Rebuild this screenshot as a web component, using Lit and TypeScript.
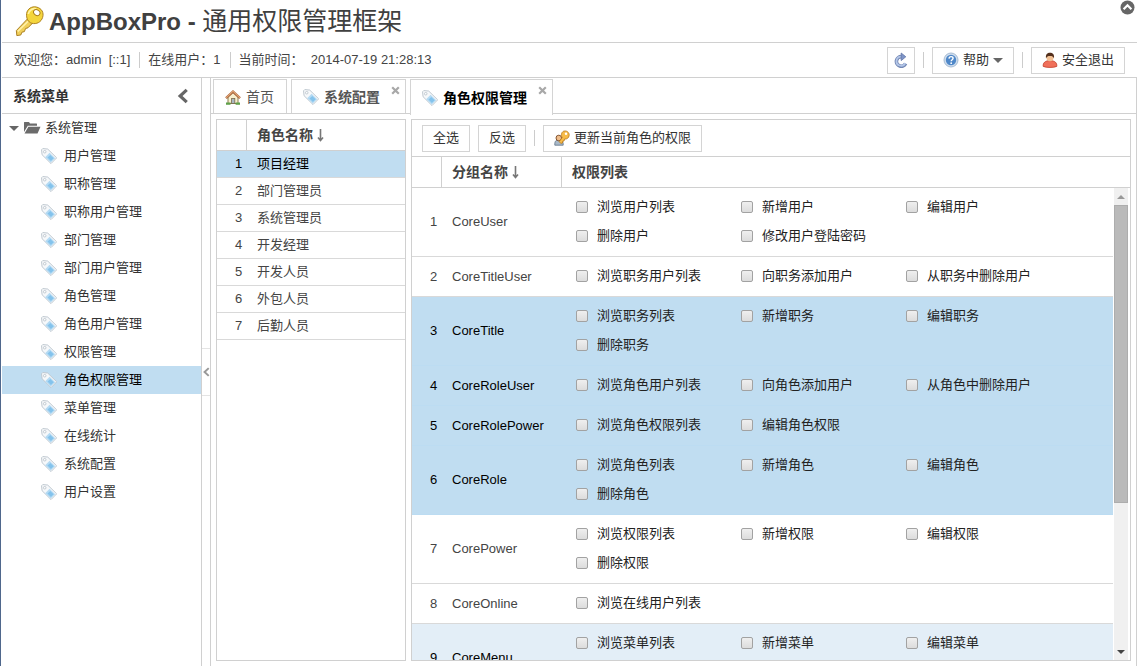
import { LitElement, html, svg, css, nothing } from "lit";
import { customElement, state } from "lit/decorators.js";
import { classMap } from "lit/directives/class-map.js";

const tagIcon = () => svg`<svg class="icon" width="16" height="16" viewBox="0.5 0.5 15 15" aria-hidden="true">
  <path d="M1 2.200 2.200 1l4.600.5 8.400 8.200-5.300 5.400L1.500 6.800Z" fill="#f6f8fa" stroke="#bcc6ce" stroke-width=".9"/>
  <path d="m8.600 5 5.200 5-4.200 4.200-5.200-5Z" fill="#b4daf3"/>
  <path d="m9.200 7 3.200 3.100-2.600 2.600-3.200-3.200Z" fill="#84c3ec"/>
  <circle cx="4" cy="4" r="1.200" fill="#fff" stroke="#b9c2ca" stroke-width=".8"/>
</svg>`;

const homeIcon = svg`<svg class="icon" width="16" height="16" viewBox="0 0 16 16" aria-hidden="true">
  <path d="M3 8v6.500h10V8L8 3.400Z" fill="#f7efcf" stroke="#8a7a52"/>
  <path d="M1 9.200 8 2.600l7 6.600" fill="none" stroke="#a8643c" stroke-width="2.400"/>
  <path d="M1 8.800 8 2.200l7 6.600" fill="none" stroke="#e3a878" stroke-width="1.100"/>
  <rect x="6.600" y="9.500" width="3.200" height="5" fill="#a9b7c4" stroke="#7a6a4a" stroke-width=".8"/>
  <path d="M1 14.600h4.500M10.600 14.600H15" stroke="#5fa048" stroke-width="2.200"/>
</svg>`;

const keyIcon = svg`<svg width="32" height="32" viewBox="0 0 34 34" aria-hidden="true">
  <path d="m15 14-12.500 13.200.5 5.300 4.200-.6 1.200-3 2.600-.6 1.300-3.300 2.600-.8L20 19Z" fill="#f0cf5a" stroke="#a87b1c" stroke-linejoin="round"/>
  <path d="M4 28 16.600 15.600" stroke="#fff0a8" stroke-width="1.600"/>
  <path d="M13.400 9.200C14 4 19 1 24 2.200c5.600 1.400 8 6 6.400 11-1.500 5-6.500 7.600-11.500 6.200-4-1.200-6-5.400-5.500-10.200Z" fill="#f4d53c" stroke="#a87b1c"/>
  <path d="M15.200 9.600c.8-4 4.600-6.400 8.400-5.600" fill="none" stroke="#fff3a5" stroke-width="1.800"/>
  <ellipse cx="24.200" cy="8" rx="3.600" ry="2.900" fill="#fff" stroke="#a87b1c" transform="rotate(35 24.200 8)"/>
</svg>`;

const refreshIcon = svg`<svg class="icon" width="16" height="16" viewBox="0 0 16 16" aria-hidden="true">
  <path d="M12.600 11.400A4.800 4.800 0 1 1 8.600 4.600" fill="none" stroke="#7488b4" stroke-width="3.600"/>
  <path d="M12.200 11.200A4.600 4.600 0 1 1 8.600 4.600" fill="none" stroke="#b3c6e8" stroke-width="1.800"/>
  <path d="m8.200 1 4.600 3.800L8.200 8.600Z" fill="#7f95c8" stroke="#5f74a6" stroke-width=".8"/>
</svg>`;

const helpIcon = svg`<svg class="icon" width="16" height="16" viewBox="0 0 16 16" aria-hidden="true">
  <circle cx="8" cy="8" r="7" fill="#cfdded" stroke="#a9bdd4"/>
  <circle cx="8" cy="8" r="5.200" fill="#4f88c9"/>
  <path d="M6 6.600c.1-1.400 1-2 2.100-2s2 .7 2 1.700c0 1.300-1.900 1.500-1.900 2.900" fill="none" stroke="#fff" stroke-width="1.400"/>
  <circle cx="8.200" cy="11.200" r=".9" fill="#fff"/>
</svg>`;

const userIcon = svg`<svg class="icon" width="16" height="16" viewBox="0 0 16 16" aria-hidden="true">
  <path d="M1.200 14.400c-.4-3.600 2-5.800 6.800-5.800s7.200 2.200 6.800 5.800c-3 1.400-10.600 1.400-13.600 0Z" fill="#f0705a" stroke="#c2402c" stroke-width=".8"/>
  <circle cx="8" cy="5.600" r="3.600" fill="#f2c195"/>
  <path d="M4 6.200C3.400 2.400 5.400.8 8 .8s4.600 1.600 4 5.400C11 4.600 10.400 4 8 4s-3 .6-4 2.200Z" fill="#54301c"/>
</svg>`;

const groupKeyIcon = svg`<svg class="icon" width="16" height="16" viewBox="0 0 16 16" aria-hidden="true">
  <path d="M.8 15.200c-.2-3.800 1-5.400 4-5.400s4.600 1.600 4.400 5.400Z" fill="#a9b9c9" stroke="#5f7388" stroke-width=".8"/>
  <circle cx="4.800" cy="8" r="2.800" fill="#efbd8c" stroke="#7a4a25" stroke-width=".9"/>
  <path d="M6.800 13.400 5.200 11.600l3-4C6.600 5 7.600 2 9.600 1.200c3-1 5.800 1.200 5.600 4-.3 2.800-2.400 4.200-4.600 3.800l-.6 2-1.200.2-.4 1.800Z" fill="#f7bb48" stroke="#b9781c" stroke-width=".8"/>
  <circle cx="12" cy="3.800" r="1.200" fill="#fff"/>
</svg>`;

const sortIcon = svg`<svg width="9" height="14" viewBox="0 0 9 14" aria-hidden="true">
  <path d="M4.500 1v11M2 9.400l2.500 3 2.500-3" fill="none" stroke="#777" stroke-width="1.600"/>
</svg>`;

const folderIcon = svg`<svg class="icon" width="18" height="16" viewBox="0 0 18 16" aria-hidden="true">
  <path d="M1 12V2.500Q1 2 1.500 2h4.300q.4 0 .6.400L7 3.500h6.500q.5 0 .5.500v1.700H4.800Z" fill="#6b6b6b"/>
  <path d="M5.400 6.700H17.500L14.500 13.500H1.500Z" fill="#6b6b6b"/>
</svg>`;

const chevron = (size: number, color: string) => svg`<svg width=${size} height=${size} viewBox="0 0 14 14" aria-hidden="true">
  <path d="M9.400 1.600 3.600 7l5.800 5.400" fill="none" stroke=${color} stroke-width="2.800"/>
</svg>`;

const closeIcon = svg`<svg width="9" height="9" viewBox="0 0 9 9" aria-hidden="true">
  <path d="m1.200 1.200 6.600 6.600m0-6.600L1.200 7.800" stroke="#a8a8a8" stroke-width="2.200"/>
</svg>`;

const menuItems = [
  "用户管理", "职称管理", "职称用户管理", "部门管理", "部门用户管理", "角色管理", "角色用户管理",
  "权限管理", "角色权限管理", "菜单管理", "在线统计", "系统配置", "用户设置",
];

const roles = ["项目经理", "部门管理员", "系统管理员", "开发经理", "开发人员", "外包人员", "后勤人员"];

interface PowerGroup { name: string; state?: "selected" | "hover"; powers: string[] }

const groups: PowerGroup[] = [
  { name: "CoreUser", powers: ["浏览用户列表", "新增用户", "编辑用户", "删除用户", "修改用户登陆密码"] },
  { name: "CoreTitleUser", powers: ["浏览职务用户列表", "向职务添加用户", "从职务中删除用户"] },
  { name: "CoreTitle", state: "selected", powers: ["浏览职务列表", "新增职务", "编辑职务", "删除职务"] },
  { name: "CoreRoleUser", state: "selected", powers: ["浏览角色用户列表", "向角色添加用户", "从角色中删除用户"] },
  { name: "CoreRolePower", state: "selected", powers: ["浏览角色权限列表", "编辑角色权限"] },
  { name: "CoreRole", state: "selected", powers: ["浏览角色列表", "新增角色", "编辑角色", "删除角色"] },
  { name: "CorePower", powers: ["浏览权限列表", "新增权限", "编辑权限", "删除权限"] },
  { name: "CoreOnline", powers: ["浏览在线用户列表"] },
  { name: "CoreMenu", state: "hover", powers: ["浏览菜单列表", "新增菜单", "编辑菜单", "删除菜单"] },
];

@customElement("app-root")
export class AppRoot extends LitElement {
  @state() private activeRole = 0;
  @state() private activeMenu = 8;

  static styles = css`
    :host {
      display: flex;
      flex-direction: column;
      box-sizing: border-box;
      height: 100vh;
      padding-left: 1px;
      border-left: 1px solid #4f678c;
      overflow: hidden;
      background: #fff;
      color: #444;
      font: 13px/20px "Liberation Sans", "Noto Sans CJK SC", sans-serif;
    }
    *, *::before { box-sizing: border-box; }
    button { font: inherit; color: inherit; background: none; border: 0; padding: 0; cursor: pointer; }
    a { color: inherit; text-decoration: none; }
    ul { list-style: none; margin: 0; padding: 0; }
    table { width: 100%; border-collapse: separate; border-spacing: 0; table-layout: fixed; }
    svg { display: block; flex: none; }
    .icon { flex: none; }

    .banner {
      display: flex;
      align-items: center;
      flex: none;
      gap: 3px;
      height: 43px;
      padding: 0 2px 0 12px;
      border-bottom: 1px solid #d0d0d0;
    }
    .title { margin: 0; font-size: 24px; line-height: 40px; color: #404040; }
    .title-cn { font-size: 25px; font-weight: 400; }
    .fold { align-self: flex-start; margin-left: auto; }

    .bar {
      display: flex;
      align-items: center;
      flex: none;
      height: 35px;
      padding: 0 12px;
      border-bottom: 1px solid #d0d0d0;
    }
    .facts { display: flex; align-items: center; white-space: pre; }
    .fact + .fact { margin-left: 9px; padding-left: 8px; border-left: 1px solid #ccc; line-height: 16px; }
    .actions { display: flex; align-items: center; margin-left: auto; }
    .rule { width: 1px; height: 16px; margin: 0 8px; background: #ccc; }
    .btn {
      display: flex;
      align-items: center;
      gap: 4px;
      height: 27px;
      padding: 0 10px;
      border: 1px solid #d4d4d4;
      background: #fff;
      color: #333;
    }
    .btn.tight { padding: 0 5px; }
    .caret { border: 5px solid transparent; border-top-color: #666; border-bottom: 0; }

    .frame { display: flex; flex: 1; min-height: 0; }
    .side { flex: none; width: 200px; border-right: 1px solid #d0d0d0; }
    .side-head {
      display: flex;
      align-items: center;
      justify-content: space-between;
      height: 36px;
      padding: 0 9px 0 11px;
      border-bottom: 1px solid #d0d0d0;
    }
    .side-title { margin: 0; font-size: 14px; color: #333; }
    .node, .leaf { display: flex; align-items: center; width: 100%; height: 28px; color: #333; }
    .node { gap: 4px; padding-left: 7px; }
    .leaf { gap: 7px; padding-left: 39px; }
    .leaf.on { background: #c0ddf1; color: #000; }
    .split { display: flex; align-items: center; flex: none; width: 8px; }
    .grip {
      display: flex;
      align-items: center;
      width: 8px;
      height: 48px;
      border: 1px solid #e4e4e4;
      border-width: 1px 0;
    }

    .main { display: flex; flex-direction: column; flex: 1; min-width: 0; border: 1px solid #d0d0d0; border-width: 0 1px; }
    .tabs { display: flex; flex: none; gap: 4px; height: 36px; padding: 1px 2px 0; border-bottom: 1px solid #d0d0d0; }
    .tab {
      display: flex;
      align-items: center;
      gap: 5px;
      padding: 0 11px;
      border: 1px solid #d4d4d4;
      border-bottom: 0;
      font-size: 14px;
      line-height: 18px;
      font-weight: 700;
      color: #555;
    }
    .tab.plain { font-weight: 400; padding-right: 12px; }
    .tab.closable { padding-right: 5px; }
    .tab.on { height: 36px; background: #fff; color: #000; }
    .x { align-self: flex-start; margin: 6px 0 0 6px; }

    .panes { display: flex; flex: 1; gap: 5px; min-height: 0; padding: 5px; }
    .pane { display: flex; flex-direction: column; min-width: 0; border: 1px solid #d0d0d0; }
    .roles { flex: none; width: 190px; }
    .powers { flex: 1; }
    th { height: 31px; padding: 0 10px; border-bottom: 1px solid #d0d0d0; border-left: 1px solid #d0d0d0; text-align: left; font-size: 14px; color: #444; }
    th:first-child { border-left: 0; }
    .sort { display: flex; align-items: center; gap: 3px; }
    td { padding: 0 10px; border-bottom: 1px solid #d9d9d9; }
    .num { width: 29px; }
    .name { width: 120px; }
    td.num { padding: 0; text-align: center; }
    .roles td { height: 27px; padding-left: 11px; }
    .roles td.num { padding-left: 18px; text-align: left; }
    .picked td { background: #c0ddf1; color: #000; }
    .tools { display: flex; align-items: center; flex: none; height: 37px; padding: 0 10px; border-bottom: 1px solid #d0d0d0; }
    .tools .btn + .btn { margin-left: 8px; }

    .view { display: flex; flex: 1; min-height: 0; }
    .scroll { flex: 1; min-width: 0; overflow: auto; scrollbar-width: none; }
    .scroll td.num { padding-left: 14px; }
    .scroll td.name { padding-left: 11px; }
    .scroll td.perm { padding: 5px 10px 5px 15px; }
    .selected td { background: #c0ddf1; color: #000; border-color: #bcdcf2; }
    .hover td { background: #e3eef7; color: #000; }
    .grid { display: grid; grid-template-columns: repeat(3, 165px); }
    .check { display: flex; align-items: center; gap: 9px; height: 29px; padding-bottom: 1px; white-space: nowrap; color: #222; }
    .box {
      appearance: none;
      flex: none;
      width: 12px;
      height: 12px;
      margin: 0;
      border: 1px solid #a2a2a2;
      border-radius: 2px;
      background: linear-gradient(#efefef, #dcdcdc);
    }
    .box:checked { background: #3f7fc9; }
    .track { display: flex; flex-direction: column; align-items: center; flex: none; width: 17px; padding: 0 2px 0 1px; }
    .rail { flex: 1; width: 100%; background: #f0f0f0; }
    .thumb { height: 68%; background: #bababa; border: 1px solid #adadad; }
    .end { display: grid; place-items: center; width: 100%; height: 17px; background: #f0f0f0; }
    .up, .down { border: 4px solid transparent; }
    .up { border-top: 0; border-bottom-color: #999; }
    .down { border-bottom: 0; border-top-color: #444; }
  `;

  private renderGroup(group: PowerGroup, index: number) {
    return html`<tr class=${group.state ?? nothing}>
      <td class="num">${index + 1}</td>
      <td class="name">${group.name}</td>
      <td class="perm"><div class="grid">
        ${group.powers.map((p) => html`<label class="check"><input class="box" type="checkbox" />${p}</label>`)}
      </div></td>
    </tr>`;
  }

  render() {
    return html`
      <header class="banner">
        ${keyIcon}
        <h1 class="title">AppBoxPro - <span class="title-cn">通用权限管理框架</span></h1>
        <button class="fold" aria-label="折叠">
          <svg width="15" height="15" viewBox="0 0 15 15" aria-hidden="true">
            <circle cx="7.500" cy="7.500" r="7" fill="#666" />
            <path d="m3.600 9.200 3.900-3.900 3.900 3.900" fill="none" stroke="#fff" stroke-width="2.200" />
          </svg>
        </button>
      </header>
      <div class="bar">
        <div class="facts">
          <span class="fact">欢迎您：admin&nbsp; [::1]</span><span class="fact">在线用户：1</span><span class="fact">当前时间：&nbsp; 2014-07-19 21:28:13</span>
        </div>
        <div class="actions">
          <button class="btn tight" aria-label="刷新">${refreshIcon}</button>
          <span class="rule"></span>
          <button class="btn">${helpIcon}帮助<span class="caret"></span></button>
          <span class="rule"></span>
          <button class="btn">${userIcon}安全退出</button>
        </div>
      </div>
      <div class="frame">
        <nav class="side">
          <div class="side-head">
            <h2 class="side-title">系统菜单</h2>
            <button aria-label="收起">${chevron(16, "#666")}</button>
          </div>
          <button class="node"><span class="caret"></span>${folderIcon}系统管理</button>
          <ul>
            ${menuItems.map((m, i) => html`<li><a href="#"
              class=${classMap({ leaf: true, on: i === this.activeMenu })}
              @click=${(e: Event) => { e.preventDefault(); this.activeMenu = i; }}>${tagIcon()}${m}</a></li>`)}
          </ul>
        </nav>
        <div class="split"><button class="grip" aria-label="折叠菜单">${chevron(10, "#999")}</button></div>
        <main class="main">
          <div class="tabs">
            <button class="tab plain">${homeIcon}首页</button>
            <button class="tab closable">${tagIcon()}系统配置<span class="x">${closeIcon}</span></button>
            <button class="tab closable on">${tagIcon()}角色权限管理<span class="x">${closeIcon}</span></button>
          </div>
          <div class="panes">
            <section class="pane roles">
              <table>
                <thead><tr><th class="num"></th><th><span class="sort">角色名称${sortIcon}</span></th></tr></thead>
                <tbody>
                  ${roles.map((r, i) => html`<tr class=${classMap({ picked: i === this.activeRole })}
                    @click=${() => { this.activeRole = i; }}><td class="num">${i + 1}</td><td>${r}</td></tr>`)}
                </tbody>
              </table>
            </section>
            <section class="pane powers">
              <div class="tools">
                <button class="btn">全选</button>
                <button class="btn">反选</button>
                <span class="rule"></span>
                <button class="btn">${groupKeyIcon}更新当前角色的权限</button>
              </div>
              <table>
                <thead><tr><th class="num"></th><th class="name"><span class="sort">分组名称${sortIcon}</span></th><th>权限列表</th></tr></thead>
              </table>
              <div class="view">
                <div class="scroll">
                  <table><tbody>${groups.map((g, i) => this.renderGroup(g, i))}</tbody></table>
                </div>
                <div class="track" aria-hidden="true">
                  <div class="end"><span class="up"></span></div>
                  <div class="rail"><div class="thumb"></div></div>
                  <div class="end"><span class="down"></span></div>
                </div>
              </div>
            </section>
          </div>
        </main>
      </div>
    `;
  }
}
